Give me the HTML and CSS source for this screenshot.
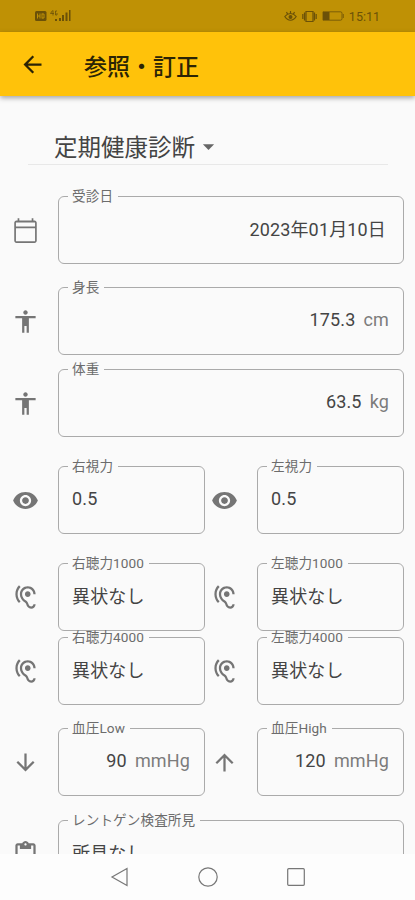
FILE: index.html
```html
<!DOCTYPE html>
<html lang="ja">
<head>
    <meta charset="UTF-8">
    <meta name="viewport" content="width=device-width, initial-scale=1.0">
    <title>参照・訂正</title>
    <link rel="stylesheet" href="styles.css">
</head>
<body>
    <svg class="sprite" width="0" height="0">
        <symbol id="calendar" viewBox="0 0 24 24"><path d="M20 3h-1V1h-1.500v2h-11V1H5v2H4c-1.100 0-2 .9-2 2v16c0 1.100.9 2 2 2h16c1.100 0 2-.9 2-2V5c0-1.100-.9-2-2-2zm.5 18.500h-17V10h17v11.500zm0-13h-17V4.800h17v3.700z"/></symbol>
        <symbol id="person" viewBox="0 0 24 24"><path d="M12 2c1.100 0 2 .9 2 2s-.9 2-2 2-2-.9-2-2 .9-2 2-2zm9 7h-6v13h-2v-6h-2v6H9V9H3V7h18v2z"/></symbol>
        <symbol id="eye" viewBox="0 0 24 24"><path d="M12 4.500C7 4.500 2.730 7.610 1 12c1.730 4.390 6 7.500 11 7.500s9.270-3.110 11-7.500c-1.730-4.390-6-7.500-11-7.500zM12 17c-2.760 0-5-2.240-5-5s2.240-5 5-5 5 2.240 5 5-2.240 5-5 5zm0-8c-1.660 0-3 1.340-3 3s1.340 3 3 3 3-1.340 3-3-1.340-3-3-3z"/></symbol>
        <symbol id="ear" viewBox="0 0 24 24"><path d="M17 20c-.29 0-.56-.06-.76-.15-.71-.37-1.210-.88-1.710-2.380-.51-1.560-1.470-2.290-2.390-3-.79-.61-1.610-1.240-2.320-2.530C9.290 10.980 9 9.930 9 9c0-2.800 2.200-5 5-5s5 2.200 5 5h2c0-3.930-3.070-7-7-7S7 5.070 7 9c0 1.260.38 2.650 1.070 3.900.91 1.650 1.980 2.480 2.850 3.150.81.62 1.390 1.070 1.710 2.050.6 1.820 1.370 2.840 2.730 3.550.51.23 1.070.35 1.640.35 2.210 0 4-1.790 4-4h-2c0 1.100-.9 2-2 2zM7.640 2.640L6.220 1.220C4.230 3.210 3 5.960 3 9s1.230 5.790 3.220 7.780l1.410-1.410C6.010 13.740 5 11.490 5 9s1.010-4.740 2.640-6.360zM11.500 9c0 1.380 1.120 2.500 2.500 2.500s2.500-1.120 2.500-2.500-1.120-2.500-2.500-2.500-2.500 1.120-2.500 2.500z"/></symbol>
        <symbol id="down" viewBox="0 0 24 24"><path d="M20 12l-1.410-1.410L13 16.170V4h-2v12.170l-5.580-5.590L4 12l8 8 8-8z"/></symbol>
        <symbol id="up" viewBox="0 0 24 24"><path d="M4 12l1.410 1.410L11 7.830V20h2V7.830l5.580 5.590L20 12l-8-8-8 8z"/></symbol>
        <symbol id="clipboard" viewBox="0 0 24 24"><path d="M19 2h-4.180C14.400.84 13.300 0 12 0S9.600.84 9.180 2H5c-1.100 0-2 .9-2 2v16c0 1.100.9 2 2 2h14c1.100 0 2-.9 2-2V4c0-1.100-.9-2-2-2zm-7 0c.55 0 1 .45 1 1s-.45 1-1 1-1-.45-1-1 .45-1 1-1zm7 18H5V4h2v3h10V4h2v16z"/></symbol>
    </svg>

    <div class="status-bar">
        <svg class="status-left" width="37" height="14" viewBox="0 0 37 14">
            <rect x="0" y="2" width="11.500" height="10" rx="1.500"/>
            <path class="cut" d="M2.500 4.500v5M5 4.500v5M2.500 7H5M7 4.500v5M7 5h2v4H7"/>
            <path class="line thin" d="M17.500 1.500l-2 3h3.500M18 1.500v5M22 2h-1.500v4H22V4"/>
            <path d="M20 12v-2h2v2zM24 12V9h2v3zM27 12V6h2v6zM30.500 12V3.500h2V12zM34 12V1h1.500v11z"/>
        </svg>
        <div class="status-right">
            <svg width="13" height="12" viewBox="0 0 13 12">
                <path class="line" d="M.8 6.500C4 2.500 9 2.500 12.200 6.500 9 11.500 4 11.500.8 6.500zM6.500 1v2.500M2.500 2l1 2M10.500 2l-1 2"/>
                <circle cx="6.500" cy="7" r="2"/>
            </svg>
            <svg width="15" height="13" viewBox="0 0 15 13">
                <path class="line" d="M4 1.500h7v10H4zM.8 4v5M2.500 2.500v8M14.200 4v5M12.500 2.500v8"/>
            </svg>
            <svg class="battery" width="22" height="10" viewBox="0 0 22 10">
                <path class="line thin" d="M1 .8h17.500q1.500 0 1.500 1.500v5.400q0 1.500-1.500 1.500H1zM21.300 3v4"/>
                <rect x="1" y="1" width="6.500" height="8"/>
            </svg>
            <span>15:11</span>
        </div>
    </div>

    <header class="app-bar">
        <svg width="27" height="27" viewBox="0 0 24 24"><path d="M20 11H7.830l5.590-5.590L12 4l-8 8 8 8 1.410-1.410L7.830 13H20v-2z"/></svg>
        <h1>参照・訂正</h1>
    </header>

    <main>
        <div class="select">
            <span>定期健康診断</span>
            <svg width="27" height="27" viewBox="0 0 24 24"><path d="M7 10l5 5 5-5z"/></svg>
        </div>

        <div class="row date">
            <svg class="icon"><use href="#calendar"/></svg>
            <fieldset class="number"><legend>受診日</legend><span class="value">2023年01月10日</span></fieldset>
        </div>
        <div class="row height">
            <svg class="icon"><use href="#person"/></svg>
            <fieldset class="number"><legend>身長</legend><span class="value">175.3</span><span class="unit">cm</span></fieldset>
        </div>
        <div class="row weight">
            <svg class="icon"><use href="#person"/></svg>
            <fieldset class="number"><legend>体重</legend><span class="value">63.5</span><span class="unit">kg</span></fieldset>
        </div>
        <div class="row pair vision">
            <svg class="icon"><use href="#eye"/></svg>
            <fieldset><legend>右視力</legend><span class="value">0.5</span></fieldset>
            <svg class="icon"><use href="#eye"/></svg>
            <fieldset><legend>左視力</legend><span class="value">0.5</span></fieldset>
        </div>
        <div class="row pair hearing">
            <svg class="icon"><use href="#ear"/></svg>
            <fieldset><legend>右聴力1000</legend><span class="value">異状なし</span></fieldset>
            <svg class="icon"><use href="#ear"/></svg>
            <fieldset><legend>左聴力1000</legend><span class="value">異状なし</span></fieldset>
        </div>
        <div class="row pair hearing-high">
            <svg class="icon"><use href="#ear"/></svg>
            <fieldset><legend>右聴力4000</legend><span class="value">異状なし</span></fieldset>
            <svg class="icon"><use href="#ear"/></svg>
            <fieldset><legend>左聴力4000</legend><span class="value">異状なし</span></fieldset>
        </div>
        <div class="row pair pressure">
            <svg class="icon"><use href="#down"/></svg>
            <fieldset class="number"><legend>血圧Low</legend><span class="value">90</span><span class="unit">mmHg</span></fieldset>
            <svg class="icon"><use href="#up"/></svg>
            <fieldset class="number"><legend>血圧High</legend><span class="value">120</span><span class="unit">mmHg</span></fieldset>
        </div>
        <div class="row xray">
            <svg class="icon"><use href="#clipboard"/></svg>
            <fieldset><legend>レントゲン検査所見</legend><span class="value">所見なし</span></fieldset>
        </div>
    </main>

    <nav class="nav-bar">
        <svg width="20" height="20" viewBox="0 0 20 20"><path d="M17 1.500v17L2 10z"/></svg>
        <svg width="20" height="20" viewBox="0 0 20 20"><circle cx="10" cy="10" r="9.200"/></svg>
        <svg width="20" height="20" viewBox="0 0 20 20"><rect x="1.700" y="1.700" width="16.600" height="16.600" rx="1"/></svg>
    </nav>
</body>
</html>
```
FILE: styles.css
```css
* {
    box-sizing: border-box;
}
body {
    margin: 0;
    height: 900px;
    display: flex;
    flex-direction: column;
    overflow: hidden;
    font-family: Roboto, "Noto Sans CJK JP", sans-serif;
    background-color: #fafafa;
    color: #444;
}
svg {
    display: block;
    flex-shrink: 0;
}
.sprite {
    position: absolute;
}
.status-bar {
    height: 32px;
    flex-shrink: 0;
    display: flex;
    justify-content: space-between;
    align-items: center;
    padding: 0 35px 0 35px;
    background-color: #bf9105;
    color: #6b5108;
    fill: #6b5108;
    font-size: 12.5px;
}
.status-bar .line {
    fill: none;
    stroke: #6b5108;
    stroke-width: 1.2;
}
.status-bar .thin {
    stroke-width: 0.8;
}
.status-bar .cut {
    fill: none;
    stroke: #bf9105;
}
.status-right {
    display: flex;
    align-items: center;
    gap: 5px;
}
.app-bar {
    height: 64px;
    flex-shrink: 0;
    display: flex;
    align-items: center;
    gap: 38px;
    padding-left: 19px;
    background-color: #ffc20a;
    box-shadow: 0 2px 5px rgba(0, 0, 0, 0.35);
    z-index: 1;
}
.app-bar svg {
    fill: #2b2405;
}
h1 {
    margin: 2px 0 0;
    font-size: 23px;
    font-weight: 500;
    color: #2b2405;
}
main {
    flex: 1;
    min-height: 0;
    overflow: hidden;
}
.select {
    height: 37px;
    margin: 32px 27px 31px 28px;
    padding-left: 26px;
    display: flex;
    align-items: center;
    border-bottom: 1px solid #e8e8e8;
    font-size: 23.5px;
}
.select svg {
    fill: #666;
}
.row {
    height: 68px;
    display: grid;
    grid-template-columns: 46px 1fr;
    align-items: center;
    padding: 0 11px 0 12px;
}
.pair {
    grid-template-columns: 46px 147px 52px 147px;
}
.pair .icon:nth-of-type(2) {
    margin-left: 6px;
}
.height {
    margin-top: 23px;
}
.weight {
    margin-top: 14px;
}
.vision,
.hearing {
    margin-top: 29px;
}
.hearing-high {
    margin-top: 6px;
}
.pressure {
    margin-top: 23px;
}
.xray {
    margin-top: 24px;
}
.icon {
    width: 27px;
    height: 27px;
    fill: #757575;
}
fieldset {
    min-width: 0;
    height: 68px;
    margin: 0;
    padding: 0 14px 4px 13px;
    display: flex;
    align-items: center;
    border: 1px solid #aaa;
    border-radius: 6px;
}
.number {
    justify-content: flex-end;
}
.date .number {
    padding-right: 17px;
}
legend {
    margin-left: -4px;
    padding: 0 5px 0 4px;
    font-size: 13.6px;
    line-height: 1px;
    letter-spacing: 0.1px;
    white-space: nowrap;
    color: #6c6c6c;
}
.value,
.unit {
    font-size: 18px;
    letter-spacing: 0.15px;
}
.unit {
    margin-left: 8px;
    color: #7c7c7c;
}
.nav-bar {
    height: 46px;
    flex-shrink: 0;
    display: flex;
    justify-content: center;
    align-items: center;
    gap: 68px;
    background-color: #fdfdfd;
}
.nav-bar svg {
    fill: none;
    stroke: #777;
    stroke-width: 1.2;
}
```
